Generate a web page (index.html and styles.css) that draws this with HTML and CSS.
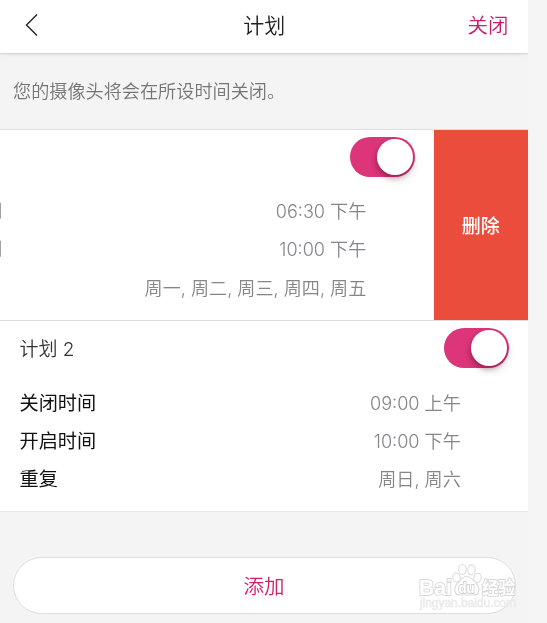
FILE: index.html
```html
<!DOCTYPE html>
<html lang="zh-CN">
<head>
<meta charset="utf-8">
<title>计划</title>
<link rel="stylesheet" href="styles.css">
</head>
<body>
<div class="screen">
  <header class="bar">
    <svg class="back" width="14" height="24" viewBox="0 0 14 24" fill="none" stroke="#222" stroke-width="1.4"><path d="M12 1.500 1.500 12 12 22.500"/></svg>
    <h1 class="title">计划</h1>
    <span class="close">关闭</span>
  </header>
  <p class="notice">您的摄像头将会在所设时间关闭。</p>
  <main class="plans">
    <section class="plan swiped">
      <div class="body">
        <div class="head"><span></span><span class="toggle"><i class="knob"></i></span></div>
        <div class="row"><span class="label">关闭时间</span><span class="value">06:30 下午</span></div>
        <div class="row"><span class="label">开启时间</span><span class="value">10:00 下午</span></div>
        <div class="row"><span class="label"></span><span class="value">周一, 周二, 周三, 周四, 周五</span></div>
      </div>
      <div class="delete">删除</div>
    </section>
    <section class="plan">
      <div class="body">
        <div class="head"><span class="name">计划 2</span><span class="toggle"><i class="knob"></i></span></div>
        <div class="row"><span class="label">关闭时间</span><span class="value">09:00 上午</span></div>
        <div class="row"><span class="label">开启时间</span><span class="value">10:00 下午</span></div>
        <div class="row"><span class="label">重复</span><span class="value">周日, 周六</span></div>
      </div>
    </section>
  </main>
  <div class="add">添加</div>
</div>
<svg class="mark" width="104" height="52" viewBox="0 0 104 52">
  <g class="logo">
    <text x="4" y="34.500" font-size="22" textLength="33" lengthAdjust="spacingAndGlyphs">Bai</text>
    <text class="cn" x="67" y="33.500" font-size="16.500" textLength="33">经验</text>
    <text class="url" x="5" y="46.800" font-size="12" textLength="96">jingyan.baidu.com</text>
  </g>
  <g fill="#fff" stroke="#dedede" stroke-width="1.2">
    <ellipse cx="41.500" cy="17.500" rx="3.700" ry="4.600" transform="rotate(-15 41.500 17.500)"/>
    <ellipse cx="47.500" cy="9.500" rx="3.700" ry="5"/>
    <ellipse cx="56.500" cy="9.800" rx="3.700" ry="5" transform="rotate(8 56.500 9.800)"/>
    <ellipse cx="62.500" cy="18" rx="3.600" ry="4.800" transform="rotate(15 62.500 18)"/>
    <path d="M51.500 16.500c-4 0-5.500 3.500-8.500 6.500-5 4.500-4 12 1.500 12h14.500c6 0 6.500-7.500 2-12-3-3-5-6.500-9.500-6.500Z"/>
  </g>
  <g class="logo"><text class="du" x="43.500" y="32.500" font-size="14.500" textLength="16" lengthAdjust="spacingAndGlyphs">du</text></g>
</svg>
</body>
</html>
```
FILE: styles.css
```css
* { box-sizing: border-box; }
body {
  margin: 0;
  background: #f5f5f5;
  font-family: Inter, "Noto Sans CJK SC", sans-serif;
  font-weight: 350;
  overflow: hidden;
}
.screen { width: 528px; height: 623px; background: #f4f4f4; overflow: hidden; will-change: transform; }
.bar {
  display: grid;
  grid-template-columns: 1fr auto 1fr;
  align-items: center;
  height: 53px;
  padding: 0 19.5px 2px 25px;
  background: #fff;
  box-shadow: 0 1px 1px #d6d6d6, 0 2px 5px #e6e6e6;
}
.back { margin-top: -2px; }
.title { margin: 0 0 0 -5px; font-size: 21px; font-weight: 350; line-height: 30px; color: #222; }
.close { justify-self: end; font-size: 20.5px; line-height: 30px; color: #c81e6e; }
.notice { margin: 0; padding: 25px 13px 0; height: 76px; font-size: 18.15px; line-height: 27px; color: #757575; }
.plans { border-top: 1px solid #dedede; border-bottom: 1px solid #e8e8e8; }
.plan { display: flex; height: 190px; background: #fff; overflow: hidden; }
.plan + .plan { border-top: 1px solid #dcdcdc; height: 191px; }
.body { flex: 0 0 528px; padding: 0 19px 0 19.5px; }
.swiped .body { margin-left: -94.5px; }
.head { display: flex; justify-content: space-between; height: 62.5px; padding-top: 7px; font-size: 19px; line-height: 40px; color: #333; }
.swiped .head { height: 61.8px; }
.name { padding-top: 1.5px; }
.toggle { display: flex; justify-content: flex-end; width: 65px; height: 40px; padding: 2px 2px 0 0; border-radius: 20px; background: #dc357a; }
.knob { width: 36px; height: 36px; border-radius: 50%; background: #fff; box-shadow: -1px 3px 5px rgba(70, 0, 40, .3), 1px 5px 9px rgba(0, 0, 0, .12); }
.row { display: flex; justify-content: space-between; height: 38.4px; padding-right: 48.2px; line-height: 38.4px; }
.label { font-size: 19.2px; font-weight: 400; color: #111; }
.swiped .label { margin-left: .8px; color: #888; }
.value { font-size: 18.1px; color: #85858a; }
.delete { flex: 0 0 94.5px; display: flex; align-items: center; justify-content: center; padding-bottom: 1px; background: #eb4d3d; color: #fff; font-size: 19px; font-weight: 500; }
.add { display: flex; align-items: center; justify-content: center; height: 57px; margin: 45px 12px 0 13px; padding: 0 1px 2px 0; border: 1px solid #dedede; border-radius: 29px; background: #fff; color: #d41e69; font-size: 20.5px; }
.mark { position: absolute; left: 415px; top: 560px; }
.logo text { font-family: "Liberation Sans", "Noto Sans CJK SC", sans-serif; font-weight: 700; fill: #fff; stroke: #dadada; stroke-width: 2px; paint-order: stroke; }
.logo .du { fill: #fff; stroke: #d4d4d4; }
.logo .url { font-weight: 400; fill: #ededed; stroke: #e4e4e4; stroke-width: .5px; }
```
